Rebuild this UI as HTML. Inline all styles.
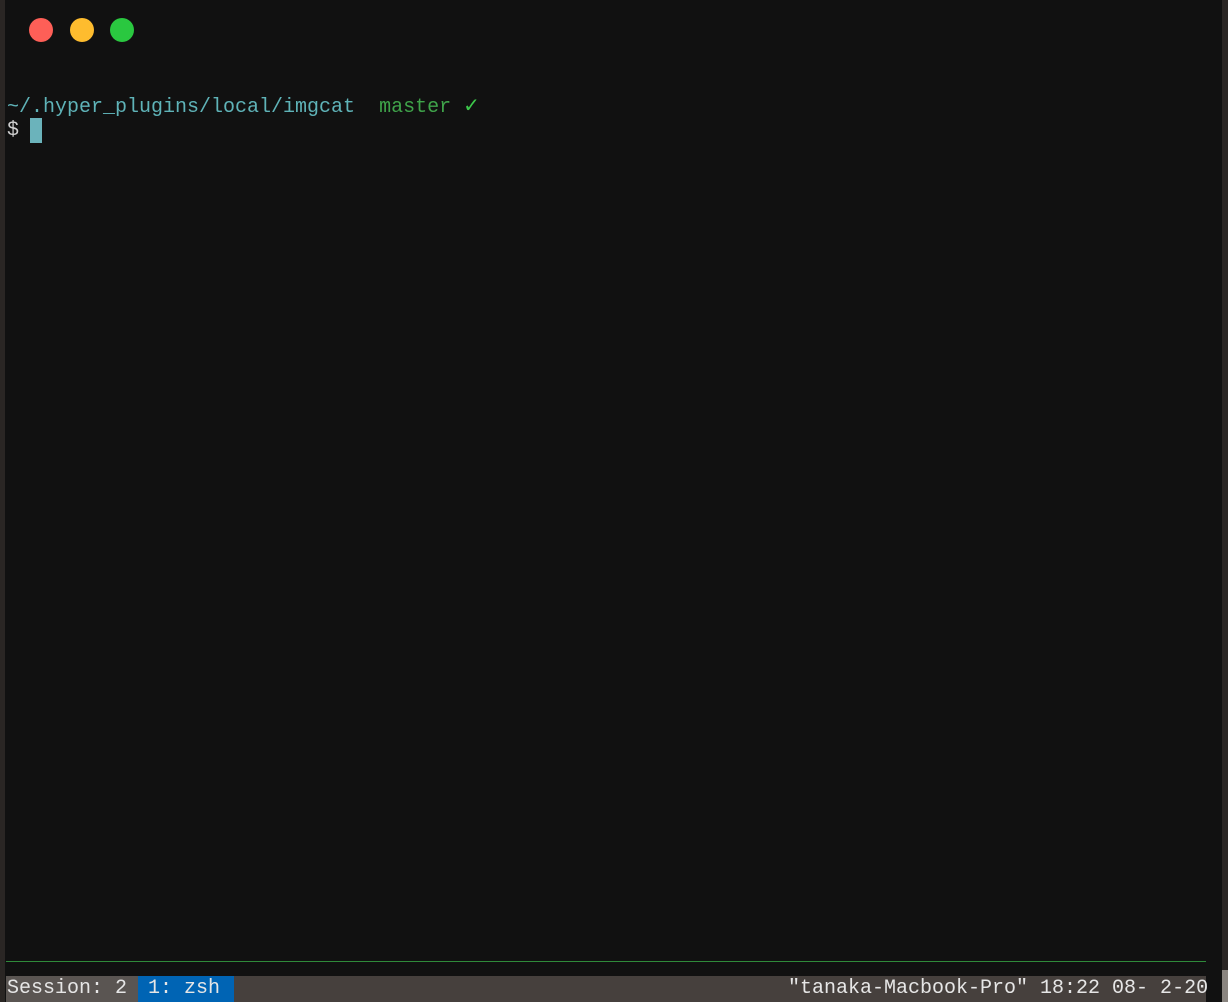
<!DOCTYPE html>
<html><head><meta charset="utf-8"><style>
html,body{margin:0;padding:0;width:1228px;height:1002px;overflow:hidden;background:#111111;}
body{position:relative;font-family:"Liberation Mono","DejaVu Sans Mono",monospace;font-size:20px;}
.edge{position:absolute;left:0;top:0;width:5px;height:1002px;background:#2a2624;}
.redge{position:absolute;left:1222px;top:0;width:6px;height:1002px;background:#2a2624;}
.redge2{position:absolute;left:1222px;top:970px;width:6px;height:32px;background:#8a8580;}
.dot{position:absolute;top:18px;width:24px;height:24px;border-radius:50%;}
.t{position:absolute;left:7px;white-space:pre;line-height:26px;}
.line{position:absolute;left:6px;top:961px;width:1200px;height:1px;background:#2f8a3a;}
.bar{position:absolute;left:6px;top:976px;width:1200px;height:26px;background:#46403d;}
.bar span{position:absolute;top:0;line-height:26px;color:#e6e6e6;white-space:pre;}
</style></head><body>
<div class="edge"></div><div class="redge"></div><div class="redge2"></div>
<div class="dot" style="left:29px;background:#fe5f57"></div>
<div class="dot" style="left:70px;background:#febc2e"></div>
<div class="dot" style="left:110px;background:#2ac840"></div>
<div class="t" style="top:92px;color:#5fb3b8">~/.hyper_plugins/local/imgcat  <span style="color:#3fa34a">master</span> <span style="color:#3cc84a;font-family:'DejaVu Sans',sans-serif;font-weight:bold">✓</span></div>
<div class="t" style="top:118px;color:#cfcfcf">$</div>
<div style="position:absolute;left:30px;top:118px;width:12px;height:25px;background:#6bb3bb"></div>
<div class="line"></div>
<div class="bar">
<span style="left:0;width:131px;background:#5a5552;padding-left:1px">Session: 2</span>
<span style="left:132px;width:96px;background:#0064b4;padding-left:10px;box-sizing:border-box">1: zsh</span>
<span style="left:782px">"tanaka-Macbook-Pro" 18:22 08- 2-20</span>
</div>
</body></html>
